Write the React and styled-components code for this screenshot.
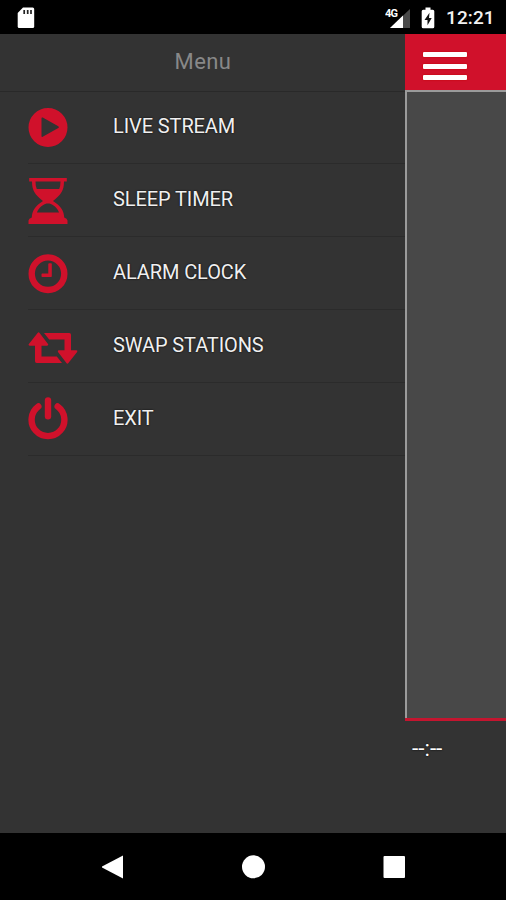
import React from 'react';
import styled, { createGlobalStyle } from 'styled-components';

const GlobalStyle = createGlobalStyle`
  * {
    box-sizing: border-box;
  }

  body {
    margin: 0;
    background-color: #000;
    font-family: Roboto, sans-serif;
  }
`;

const Screen = styled.div`
  width: 506px;
  height: 900px;
  display: flex;
  flex-direction: column;
  overflow: hidden;
  background-color: #333;
`;

const StatusBar = styled.div`
  height: 34px;
  flex: none;
  padding: 0 11px 0 17px;
  display: flex;
  align-items: center;
  justify-content: space-between;
  background-color: #000;
`;

const StatusGroup = styled.div`
  height: 34px;
  display: flex;
  align-items: center;
`;

const Clock = styled.div`
  width: 49px;
  margin-left: 10px;
  padding-top: 2px;
  color: #f2f2f2;
  font-size: 19px;
  font-weight: 500;
  line-height: 24px;
  letter-spacing: 0.1px;
  white-space: nowrap;
`;

const Body = styled.div`
  flex: 1;
  display: flex;
  min-height: 0;
`;

const Drawer = styled.div`
  width: 405px;
  flex: none;
  background-color: #333;
`;

const DrawerTitle = styled.div`
  height: 58px;
  border-bottom: 1px solid #292929;
  color: #888;
  font-size: 22px;
  letter-spacing: 0.4px;
  line-height: 55px;
  text-align: center;
  padding-left: 1px;
`;

const MenuItem = styled.div`
  height: ${(props) => props.first ? '72px' : '73px'};
  margin-left: 28px;
  border-bottom: 1px solid #2b2b2b;
  display: flex;
`;

const MenuIcon = styled.svg`
  width: 85px;
  height: 72px;
  flex: none;
  fill: #d0112b;
`;

const MenuLabel = styled.div`
  padding-top: ${(props) => props.first ? '22px' : '23px'};
  color: #f0f0f0;
  font-size: 20px;
  line-height: 24px;
  letter-spacing: -0.1px;
  white-space: nowrap;
  text-shadow: 0 0 2px #000;
`;

const Page = styled.div`
  flex: 1;
  display: flex;
  flex-direction: column;
  background-color: #333;
`;

const PageHeader = styled.div`
  height: 56px;
  padding: 18px 0 0 18px;
  display: flex;
  flex-direction: column;
  gap: 6.5px;
  background-color: #d0112b;
`;

const HamburgerBar = styled.div`
  width: 44px;
  height: 5px;
  border-radius: 1px;
  background-color: #fff;
  box-shadow: 0 0 2px #c00000;
`;

const Artwork = styled.div`
  height: 628px;
  border-top: 2px solid #9b9b9b;
  border-left: 2px solid #9b9b9b;
  background-color: #484848;
`;

const RedLine = styled.div`
  height: 3px;
  background-color: #c4152f;
`;

const TrackTime = styled.div`
  padding: 15px 0 0 7px;
  color: #fff;
  font-size: 22.5px;
  line-height: 24px;
  text-shadow: 0 0 2px #000;
`;

const NavBar = styled.div`
  height: 67px;
  flex: none;
  display: flex;
  align-items: center;
  justify-content: center;
  gap: 117px;
  background-color: #000;
`;

const NavIcon = styled.svg`
  width: 24px;
  height: 24px;
  flex: none;
  fill: #fff;
`;

const PlayIcon = () => (
  <MenuIcon viewBox="0 0 85 72">
    <path
      fillRule="evenodd"
      d="M20 16a19.5 19.5 0 1 0 0 39a19.5 19.5 0 1 0 0-39zM13.500 26.300q0-1.300 1.200-.7l15.600 8.700q1.400.9 0 1.800l-15.600 8.700q-1.200.5-1.200-.8z"
    />
  </MenuIcon>
);

const HourglassIcon = () => (
  <MenuIcon viewBox="0 0 85 72">
    <path
      fillRule="evenodd"
      d="M1.200 14h37.600v3.500H36c0 9-3 13.200-11 19.500c8 5 11 10 11.200 16.500q3 .8 3.300 3v3.500h-39v-3.500q.3-2.200 3.300-3C4 47 7 42 15 37C7 30.700 4 26.500 4 17.500H1.200zM7.500 17.500q0 4.300 1.300 7.500h22.400q1.300-3.200 1.300-7.500zM18.500 39.500C13 41.500 10 45 9 48.500h22C30 45 27 41.500 21.500 39.500z"
    />
  </MenuIcon>
);

const AlarmIcon = () => (
  <MenuIcon viewBox="0 0 85 72">
    <circle cx="20" cy="36.700" r="16.300" fill="none" stroke="#d0112b" strokeWidth="6.400" />
    <path d="M20.300 27q0-.8.8-.8h1.900q.8 0 .8.800v12.200q0 .8-.8.800h-8.700q-.8 0-.8-.8v-1.900q0-.8.8-.8h6z" />
  </MenuIcon>
);

const SwapIcon = () => (
  <MenuIcon viewBox="0 0 85 72">
    <path d="M9.800 22.700q.8-.8 1.600 0L20 33.900q.8 1.600-.9 1.800h-5.600v10.800h15.300l5.200 6.500H8.700q-1.700 0-1.700-1.700V35.700H1.700Q-.1 35.500.9 33.900z" />
    <path d="M16 23h25.300q1.700 0 1.700 1.700v15.600h5.300q1.800.2.800 1.800l-8.900 11.200q-.8.800-1.600 0L30 42.100q-.8-1.600.9-1.800h5.600V29.500H21.200z" />
  </MenuIcon>
);

const PowerIcon = () => (
  <MenuIcon viewBox="0 0 85 72">
    <g fill="none" stroke="#d0112b" strokeWidth="6.400" strokeLinecap="round">
      <path d="M10.300 23.500a16.400 16.400 0 1 0 19.400 0" />
      <path d="M20 17.500v15.800" />
    </g>
  </MenuIcon>
);

const items = [
  { label: 'LIVE STREAM', icon: PlayIcon },
  { label: 'SLEEP TIMER', icon: HourglassIcon },
  { label: 'ALARM CLOCK', icon: AlarmIcon },
  { label: 'SWAP STATIONS', icon: SwapIcon },
  { label: 'EXIT', icon: PowerIcon },
];

const SdCardIcon = () => (
  <svg width="18" height="22" viewBox="0 0 18 22">
    <path d="M6 .5h9.700q1.500 0 1.500 1.500v17.500q0 1.500-1.500 1.500H2.200Q.7 21 .7 19.500V6z" fill="#fff" />
    <path d="M7.200 3v4M10.700 3v4M14 3v4" stroke="#222" strokeWidth="1.700" />
  </svg>
);

const SignalText = styled.text`
  font-size: 11px;
  font-weight: 700;
  letter-spacing: -0.7px;
`;

const SignalIcon = () => (
  <svg width="26" height="22" viewBox="0 0 26 22">
    <path d="M25 2v19H5z" fill="#4a4a4a" />
    <path d="M18 8.500V21H5z" fill="#fff" />
    <SignalText x="0" y="9.500" fill="#fff" stroke="#000" strokeWidth="1.500" paintOrder="stroke">4G</SignalText>
  </svg>
);

const BatteryIcon = () => (
  <svg width="14" height="22" viewBox="0 0 14 22">
    <path d="M4.500.500h5v2.300h2.300q1.500 0 1.500 1.500v15.400q0 1.500-1.500 1.500H2.200q-1.500 0-1.500-1.500V4.300q0-1.500 1.500-1.500h2.300z" fill="#fff" />
    <path d="M8.500 5.800L3.500 13h3v5.200l4.200-7.200H8z" fill="#111" />
  </svg>
);

const BatterySlot = styled.div`
  margin: 1px 1px 0 10px;
  height: 22px;
`;

const SignalSlot = styled.div`
  height: 22px;
  margin-top: 1px;
`;

const SdSlot = styled.div`
  height: 22px;
  margin-top: 1px;
`;

const App = () => {
  return (
    <>
      <GlobalStyle />
      <Screen>
        <StatusBar>
          <SdSlot><SdCardIcon /></SdSlot>
          <StatusGroup>
            <SignalSlot><SignalIcon /></SignalSlot>
            <BatterySlot><BatteryIcon /></BatterySlot>
            <Clock>12:21</Clock>
          </StatusGroup>
        </StatusBar>
        <Body>
          <Drawer>
            <DrawerTitle>Menu</DrawerTitle>
            {items.map((item, index) => (
              <MenuItem key={item.label} first={index === 0}>
                <item.icon />
                <MenuLabel first={index === 0}>{item.label}</MenuLabel>
              </MenuItem>
            ))}
          </Drawer>
          <Page>
            <PageHeader>
              <HamburgerBar />
              <HamburgerBar />
              <HamburgerBar />
            </PageHeader>
            <Artwork />
            <RedLine />
            <TrackTime>--:--</TrackTime>
          </Page>
        </Body>
        <NavBar>
          <NavIcon viewBox="0 0 24 24">
            <path d="M23 0.500v23L2 12.500v-1z" />
          </NavIcon>
          <NavIcon viewBox="0 0 24 24">
            <circle cx="12.500" cy="11.800" r="11.500" />
          </NavIcon>
          <NavIcon viewBox="0 0 24 24">
            <rect x="1.500" y="1" width="21.500" height="22" rx="1" />
          </NavIcon>
        </NavBar>
      </Screen>
    </>
  );
};

export default App;
